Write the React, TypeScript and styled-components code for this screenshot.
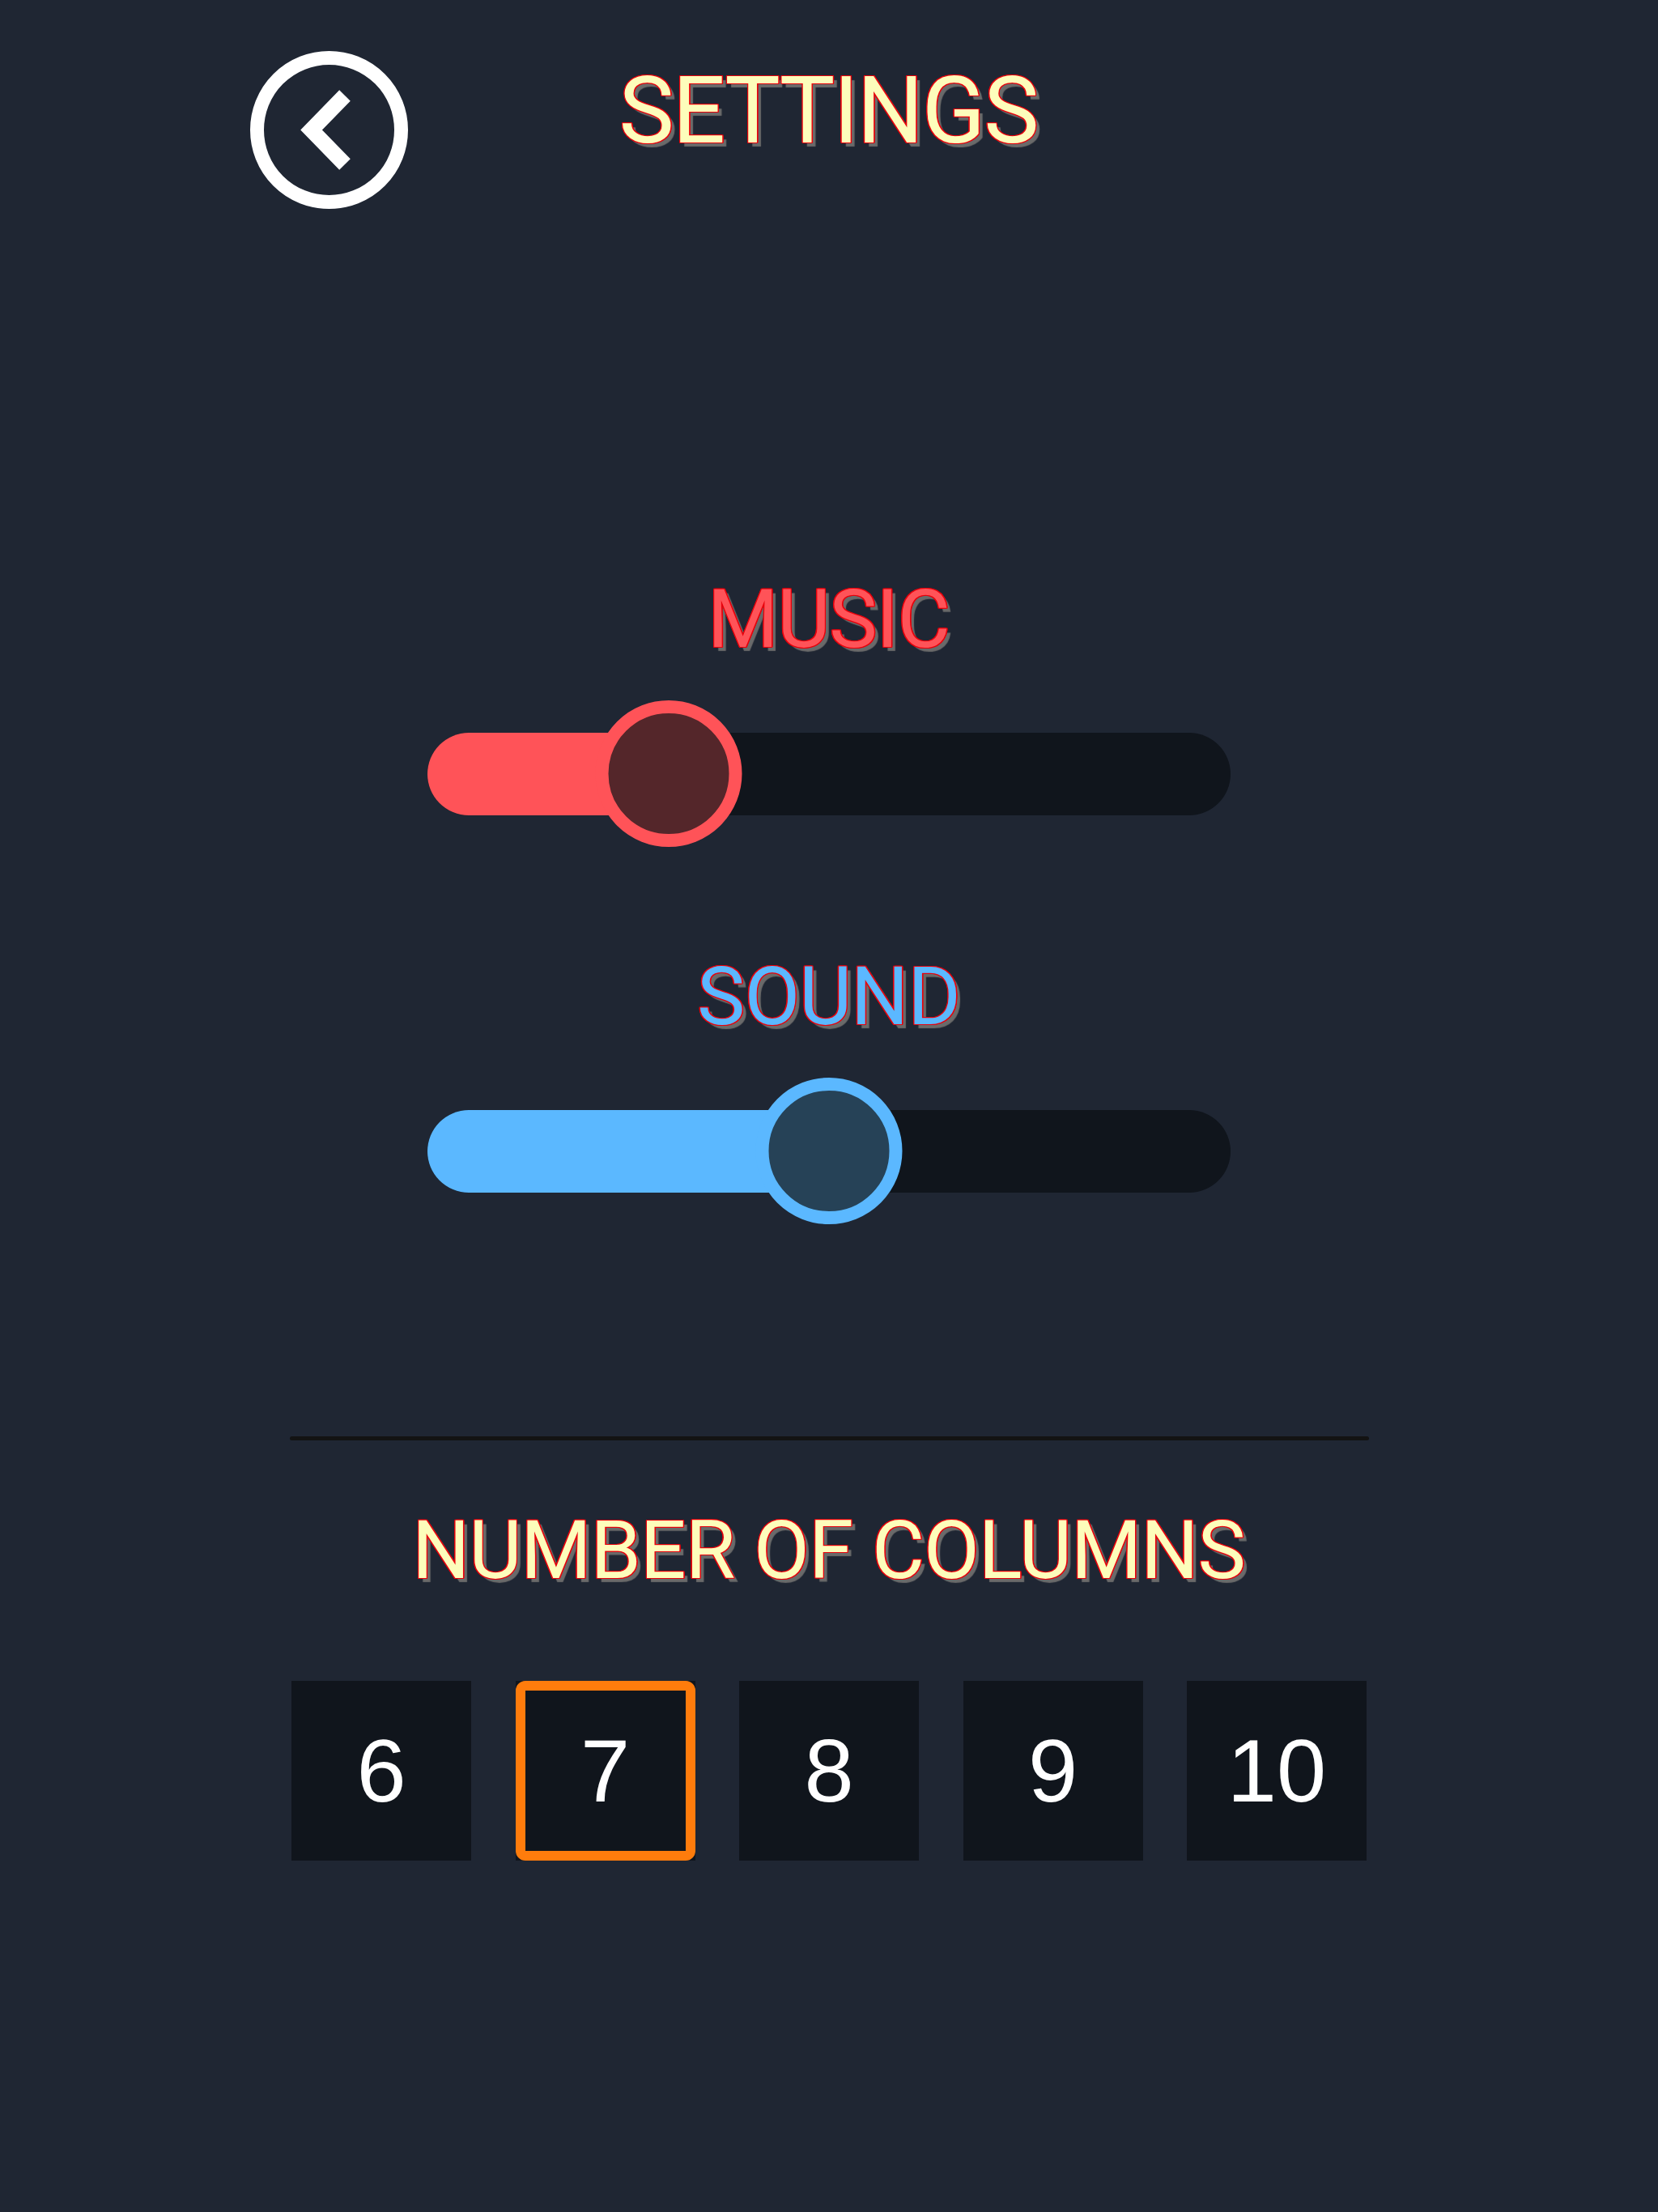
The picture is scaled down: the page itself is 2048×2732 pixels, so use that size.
import React from "react";
import styled, { createGlobalStyle } from "styled-components";

const GlobalStyle = createGlobalStyle`
  html, body {
    margin: 0;
    padding: 0;
    background: #1f2633;
  }
  body {
    font-family: Roboto, "Liberation Sans", Arial, sans-serif;
  }
  * {
    box-sizing: border-box;
  }
`;

const outlined = (fill: string) => `
  color: ${fill};
  text-shadow:
    -1.2px -1.2px 0 #e8000b,
    1.2px -1.2px 0 #e8000b,
    -1.2px 1.2px 0 #e8000b,
    1.2px 1.2px 0 #e8000b,
    -1.4px 0 0 #e8000b,
    1.4px 0 0 #e8000b,
    0 -1.4px 0 #e8000b,
    0 1.4px 0 #e8000b,
    5px 5px 1px #6a6a6a;
`;

const Page = styled.div`
  min-height: 2732px;
  display: flex;
  flex-direction: column;
  align-items: center;
`;

const Header = styled.header`
  width: 100%;
  display: grid;
  grid-template-columns: 1fr auto 1fr;
  align-items: start;
  padding-top: 63px;
`;

const BackButton = styled.button`
  justify-self: start;
  margin-left: 309px;
  width: 195px;
  height: 195px;
  padding: 0;
  border: 0;
  background: none;
  cursor: pointer;
  display: block;

  svg {
    display: block;
  }
`;

const Title = styled.h1`
  margin: 16px 2px 0 0;
  font-family: Roboto, "Liberation Sans", Arial, sans-serif;
  font-size: 115px;
  font-weight: 400;
  line-height: 1;
  letter-spacing: -2px;
  white-space: nowrap;
  ${outlined("#fdfdbb")}
`;

const Main = styled.main`
  width: 1332px;
  display: flex;
  flex-direction: column;
  align-items: center;
`;

const Label = styled.h2<{ $fill: string; $top: number }>`
  margin: ${(p) => p.$top}px 1px 0 0;
  font-family: Roboto, "Liberation Sans", Arial, sans-serif;
  font-size: 100px;
  font-weight: 400;
  line-height: 1;
  letter-spacing: -1px;
  white-space: nowrap;
  ${(p) => outlined(p.$fill)}
`;

const SliderRoot = styled.div`
  position: relative;
  margin-top: 50px;
  width: 992px;
  height: 181px;
  display: flex;
  align-items: center;
`;

const Track = styled.div`
  width: 100%;
  height: 102px;
  border-radius: 51px;
  background: #10151c;
  overflow: hidden;
  display: flex;
`;

const Fill = styled.div<{ $color: string }>`
  height: 100%;
  background: ${(p) => p.$color};
`;

const Thumb = styled.div<{ $ring: string; $core: string }>`
  position: absolute;
  top: 0;
  width: 181px;
  height: 181px;
  border-radius: 50%;
  border: 16px solid ${(p) => p.$ring};
  background: ${(p) => p.$core};
  transform: translateX(-50%);
`;

const Divider = styled.hr`
  margin: 262px 0 0;
  width: 1333px;
  height: 5px;
  border: 0;
  border-radius: 3px;
  background: #131313;
`;

const ColumnRow = styled.div`
  margin-top: 111px;
  display: grid;
  grid-template-columns: repeat(5, 222px);
  column-gap: 54.5px;
`;

const ColumnButton = styled.button<{ $active: boolean }>`
  position: relative;
  width: 222px;
  height: 222px;
  padding: 0;
  border: 0;
  background: #10151c;
  color: #ffffff;
  font-family: "Liberation Sans", Arial, Helvetica, sans-serif;
  font-size: 110px;
  line-height: 1;
  display: flex;
  align-items: center;
  justify-content: center;
  cursor: pointer;

  &::after {
    content: "";
    position: absolute;
    inset: 0;
    border: 12px solid #ff7c0c;
    border-radius: 12px;
    display: ${(p) => (p.$active ? "block" : "none")};
  }
`;

type SliderProps = {
  value: number;
  fill: string;
  ring: string;
  core: string;
};

function VolumeSlider({ value, fill, ring, core }: SliderProps) {
  const pct = `${value * 100}%`;
  return (
    <SliderRoot>
      <Track>
        <Fill $color={fill} style={{ width: pct }} />
      </Track>
      <Thumb $ring={ring} $core={core} style={{ left: pct }} />
    </SliderRoot>
  );
}

function BackIcon() {
  return (
    <svg width="195" height="195" viewBox="0 0 195 195" aria-hidden="true">
      <circle cx="97.5" cy="97.5" r="89" fill="none" stroke="#ffffff" strokeWidth="17" />
      <polyline
        points="117,55 75.5,97.5 117,140"
        fill="none"
        stroke="#ffffff"
        strokeWidth="19"
        strokeLinejoin="miter"
        strokeLinecap="butt"
      />
    </svg>
  );
}

const COLUMN_CHOICES = [6, 7, 8, 9, 10];

export default function App() {
  const [columns, setColumns] = React.useState(7);

  return (
    <Page>
      <GlobalStyle />
      <Header>
        <BackButton aria-label="Back">
          <BackIcon />
        </BackButton>
        <Title>SETTINGS</Title>
        <div />
      </Header>
      <Main>
        <Label $fill="#ff5358" $top={457}>
          MUSIC
        </Label>
        <VolumeSlider value={0.3} fill="#ff5358" ring="#ff5358" core="#54262a" />

        <Label $fill="#5bb8ff" $top={135}>
          SOUND
        </Label>
        <VolumeSlider value={0.5} fill="#5bb8ff" ring="#5bb8ff" core="#264257" />

        <Divider />

        <Label $fill="#fdfdbb" $top={86}>
          NUMBER OF COLUMNS
        </Label>
        <ColumnRow>
          {COLUMN_CHOICES.map((n) => (
            <ColumnButton key={n} $active={n === columns} onClick={() => setColumns(n)}>
              {n}
            </ColumnButton>
          ))}
        </ColumnRow>
      </Main>
    </Page>
  );
}
